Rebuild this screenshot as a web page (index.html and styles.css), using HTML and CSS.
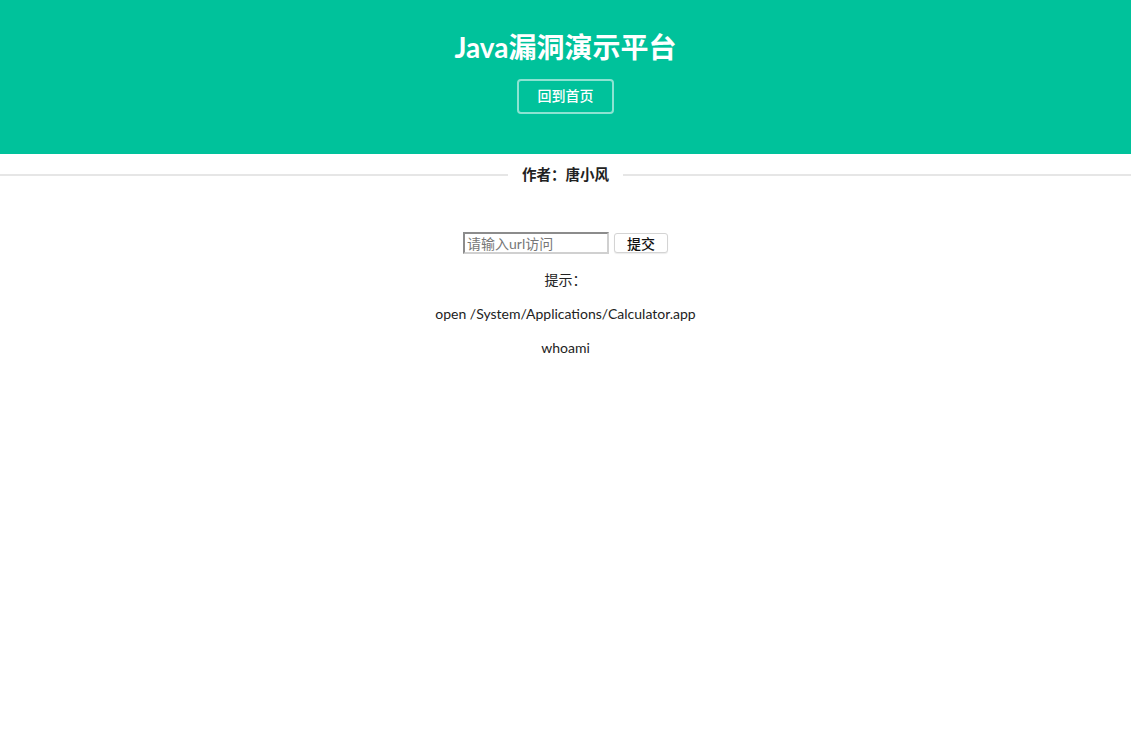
FILE: index.html
```html
<!DOCTYPE html>
<html lang="zh">
<head>
<meta charset="utf-8">
<title>Java漏洞演示平台</title>
<link rel="stylesheet" href="styles.css">
</head>
<body>
<header class="header">
  <h1 class="title">Java漏洞演示平台</h1>
  <a class="home-btn" href="#">回到首页</a>
</header>
<div class="divider">
  <span class="line"></span>
  <span class="author">作者：唐小风</span>
  <span class="line"></span>
</div>
<main class="content">
  <form class="url-form">
    <input class="url-input" type="text" placeholder="请输入url访问">
    <button class="submit-btn" type="button">提交</button>
  </form>
  <p class="tip">提示：</p>
  <p class="tip">open /System/Applications/Calculator.app</p>
  <p class="tip">whoami</p>
</main>
</body>
</html>
```
FILE: styles.css
```css
html, body {
  margin: 0;
  padding: 0;
  background: #fff;
}
body {
  font-family: Lato, "Noto Sans CJK SC", sans-serif;
  color: #222;
}
.header {
  background: #00c29b;
  height: 154px;
  box-sizing: border-box;
  padding-top: 27px;
  display: flex;
  flex-direction: column;
  align-items: center;
}
.title {
  margin: 0;
  font-size: 28px;
  line-height: 40px;
  font-weight: 700;
  color: #fff;
}
.home-btn {
  margin-top: 12px;
  width: 97px;
  height: 35px;
  box-sizing: border-box;
  border: 2px solid rgba(255, 255, 255, 0.55);
  border-radius: 4px;
  color: #fff;
  text-decoration: none;
  font-size: 14px;
  font-weight: 500;
  padding-bottom: 3px;
  display: flex;
  align-items: center;
  justify-content: center;
}
.divider {
  display: flex;
  align-items: center;
  margin-top: 10px;
  height: 22px;
}
.line {
  flex: 1;
  height: 0;
  border-top: 2px solid #e6e6e6;
}
.author {
  padding: 0 14px;
  font-size: 14.5px;
  font-weight: 700;
  color: #222;
  line-height: 22px;
}
.content {
  display: flex;
  flex-direction: column;
  align-items: center;
  padding-top: 46px;
}
.url-form {
  display: flex;
  align-items: center;
  gap: 5px;
  margin: 0;
}
.url-input {
  width: 146px;
  height: 22px;
  box-sizing: border-box;
  border-style: solid;
  border-width: 2px;
  border-color: #8c8c8c #d0d0d0 #d0d0d0 #8c8c8c;
  padding: 0 2px;
  font-family: Lato, "Noto Sans CJK SC", sans-serif;
  font-size: 14px;
  background: #fff;
  outline: none;
}
.url-input::placeholder {
  color: #777;
}
.submit-btn {
  width: 54px;
  height: 20px;
  box-sizing: border-box;
  border: 1px solid #d4d4d4;
  border-radius: 3px;
  background: #fff;
  box-shadow: 0 1px 1px rgba(0, 0, 0, 0.08);
  font-family: "Noto Sans CJK SC", sans-serif;
  font-size: 14px;
  font-weight: 500;
  color: #111;
  padding: 0;
  line-height: 18px;
}
.tip {
  margin: 16px 0 0 0;
  font-size: 14px;
  line-height: 18px;
  color: #222;
}
.url-form + .tip {
  margin-top: 17px;
}
```
